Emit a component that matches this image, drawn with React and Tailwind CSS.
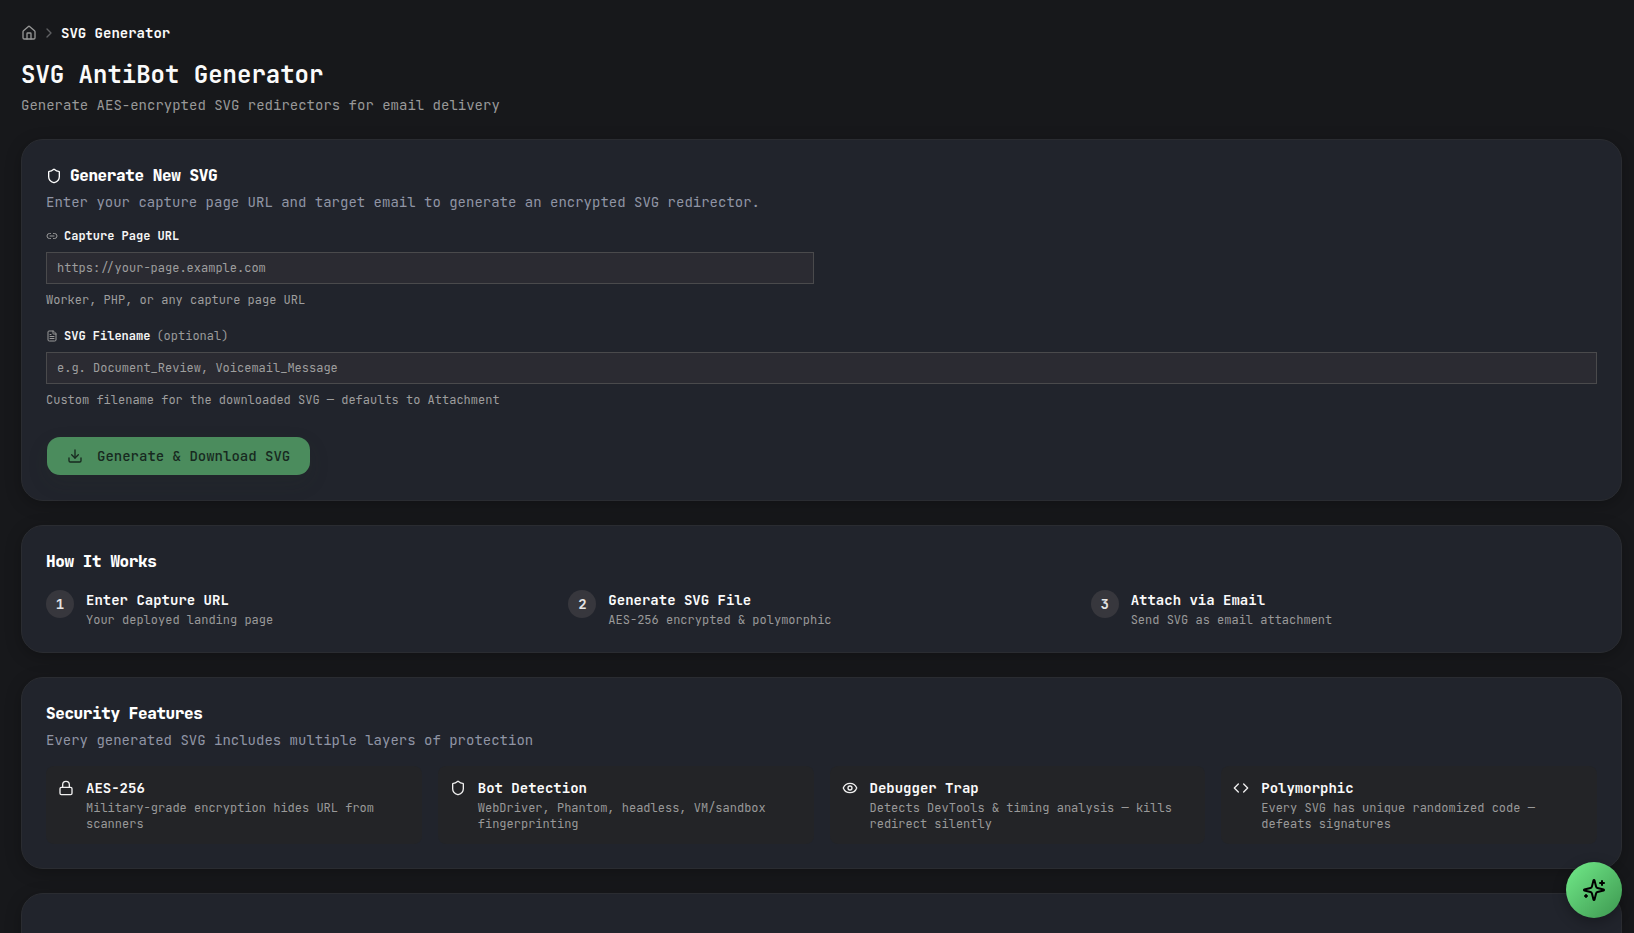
import React from "react";
import {
  ChevronRight,
  Code,
  Download,
  Eye,
  FileText,
  House,
  Link2,
  Lock,
  Shield,
} from "lucide-react";

const steps = [
  { title: "Enter Capture URL", text: "Your deployed landing page" },
  { title: "Generate SVG File", text: "AES-256 encrypted & polymorphic" },
  { title: "Attach via Email", text: "Send SVG as email attachment" },
];

const features = [
  {
    icon: Lock,
    title: "AES-256",
    text: "Military-grade encryption hides URL from scanners",
  },
  {
    icon: Shield,
    title: "Bot Detection",
    text: "WebDriver, Phantom, headless, VM/sandbox fingerprinting",
  },
  {
    icon: Eye,
    title: "Debugger Trap",
    text: "Detects DevTools & timing analysis — kills redirect silently",
  },
  {
    icon: Code,
    title: "Polymorphic",
    text: "Every SVG has unique randomized code — defeats signatures",
  },
];

const Card = ({ children, className = "" }) => (
  <section
    className={`rounded-[22px] border border-[#2a2c31] bg-[#21242c] p-6 shadow-[0_4px_16px_rgba(0,0,0,0.25)] ${className}`}
  >
    {children}
  </section>
);

const CardTitle = ({ children }) => (
  <h2 className="flex items-center gap-2 text-base font-extrabold tracking-tight text-white">
    {children}
  </h2>
);

const Field = ({ icon: Icon, label, optional, placeholder, help }) => (
  <div>
    <label className="flex items-center gap-1.5 text-xs font-bold text-[#f5f5f5]">
      <Icon size={12} className="text-[#9a9a9a]" />
      {label}
      {optional && (
        <span className="font-normal text-[#9b9b9b]">(optional)</span>
      )}
    </label>
    <input
      type="text"
      placeholder={placeholder}
      className="mt-2 block h-8 w-full border border-[#4a4a4c] bg-[#2b2b32] px-2.5 text-xs text-white outline-none placeholder:text-[#9e9e9e]"
    />
    <p className="mt-2 text-xs text-[#9e9e9e]">{help}</p>
  </div>
);

const Sparkles = () => (
  <svg
    width="24"
    height="24"
    viewBox="0 0 24 24"
    fill="none"
    stroke="currentColor"
    strokeWidth="2"
    strokeLinecap="round"
    strokeLinejoin="round"
  >
    <path d="M9.937 15.5A2 2 0 0 0 8.5 14.063l-6.135-1.582a.5.5 0 0 1 0-.962L8.5 9.936A2 2 0 0 0 9.937 8.5l1.582-6.135a.5.5 0 0 1 .963 0L14.063 8.5A2 2 0 0 0 15.5 9.937l6.135 1.581a.5.5 0 0 1 0 .964L15.5 14.063a2 2 0 0 0-1.437 1.437l-1.582 6.135a.5.5 0 0 1-.963 0z" />
    <path d="M20 3v4" />
    <path d="M22 5h-4" />
    <path d="M4 17v2" />
    <path d="M5 18H3" />
  </svg>
);

export default function App() {
  return (
    <div className="h-screen overflow-hidden bg-[#17181b] pt-[23px] pr-3 pl-[21px] font-['JetBrains_Mono','DejaVu_Sans_Mono',monospace]">
      <nav className="flex h-5 items-center gap-1 text-sm">
        <House size={16} className="text-[#969696]" />
        <ChevronRight size={16} className="text-[#5f6063]" />
        <span className="font-bold text-[#fafafa]">SVG Generator</span>
      </nav>
      <header className="mt-4">
        <h1 className="text-2xl leading-8 font-bold text-[#fafafa]">
          SVG AntiBot Generator
        </h1>
        <p className="mt-1 text-sm text-[#999999]">
          Generate AES-encrypted SVG redirectors for email delivery
        </p>
      </header>

      <main className="mt-6 flex flex-col gap-6">
        <Card>
          <CardTitle>
            <Shield size={16} />
            Generate New SVG
          </CardTitle>
          <p className="mt-1 text-sm text-[#9095a5]">
            Enter your capture page URL and target email to generate an
            encrypted SVG redirector.
          </p>
          <div className="mt-4 grid grid-cols-2 gap-4">
            <Field
              icon={Link2}
              label="Capture Page URL"
              placeholder="https://your-page.example.com"
              help="Worker, PHP, or any capture page URL"
            />
          </div>
          <div className="mt-5">
            <Field
              icon={FileText}
              label="SVG Filename"
              optional
              placeholder="e.g. Document_Review, Voicemail_Message"
              help="Custom filename for the downloaded SVG — defaults to Attachment"
            />
          </div>
          <button
            type="button"
            className="mt-7 flex h-10 w-[265px] items-center gap-3.5 rounded-[14px] border border-transparent bg-[#4b8c5d] bg-clip-padding px-5 text-sm font-medium whitespace-nowrap text-[#17291f] shadow-[0_8px_20px_rgba(40,60,40,0.12)]"
          >
            <Download size={16} className="shrink-0" />
            Generate &amp; Download SVG
          </button>
        </Card>

        <Card>
          <CardTitle>How It Works</CardTitle>
          <div className="mt-4 grid grid-cols-3 gap-4">
            {steps.map((step, i) => (
              <div key={step.title} className="flex gap-3">
                <span className="flex size-7 shrink-0 items-center justify-center rounded-full bg-[#37373d] text-sm font-bold text-[#e4e4e4]">
                  {i + 1}
                </span>
                <div>
                  <h3 className="text-sm font-bold text-[#fafafa]">
                    {step.title}
                  </h3>
                  <p className="mt-0.5 text-xs text-[#999999]">{step.text}</p>
                </div>
              </div>
            ))}
          </div>
        </Card>

        <Card>
          <CardTitle>Security Features</CardTitle>
          <p className="mt-1 text-sm text-[#9095a5]">
            Every generated SVG includes multiple layers of protection
          </p>
          <div className="mt-4 grid grid-cols-4 gap-4">
            {features.map(({ icon: Icon, title, text }) => (
              <div
                key={title}
                className="flex gap-3 rounded-lg bg-[#232427] p-3"
              >
                <Icon size={16} className="mt-0.5 shrink-0 text-[#f0f0f0]" />
                <div>
                  <h3 className="text-sm font-bold text-[#fafafa]">{title}</h3>
                  <p className="mt-0.5 text-xs text-[#999999]">{text}</p>
                </div>
              </div>
            ))}
          </div>
        </Card>

        <Card className="h-32 shrink-0" />
      </main>

      <button
        type="button"
        className="fixed right-3 bottom-[15px] flex size-14 items-center justify-center rounded-full bg-linear-135 from-[#72ec8a] to-[#3d9750] text-black shadow-[0_4px_14px_rgba(0,0,0,0.3)]"
      >
        <Sparkles />
      </button>
    </div>
  );
}
